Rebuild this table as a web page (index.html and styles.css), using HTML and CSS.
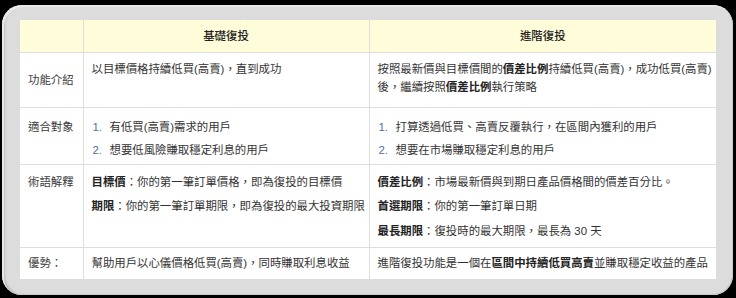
FILE: index.html
```html
<!DOCTYPE html>
<html lang="zh-Hant">
<head>
<meta charset="utf-8">
<title>復投比較</title>
<link rel="stylesheet" href="styles.css">
</head>
<body>
<div class="frame">
  <table class="compare">
    <colgroup>
      <col class="c-label">
      <col class="c-basic">
      <col class="c-adv">
    </colgroup>
    <thead>
      <tr class="row-head">
        <th></th>
        <th>基礎復投</th>
        <th>進階復投</th>
      </tr>
    </thead>
    <tbody>
      <tr class="row-intro">
        <td class="label mid">功能介紹</td>
        <td>以目標價格持續低買(高賣)，直到成功</td>
        <td>按照最新價與目標價間的<b>價差比例</b>持續低買(高賣)，成功低買(高賣)<br>後，繼續按照<b>價差比例</b>執行策略</td>
      </tr>
      <tr class="row-target">
        <td class="label">適合對象</td>
        <td>
          <ol class="nums">
            <li>有低買(高賣)需求的用戶</li>
            <li>想要低風險賺取穩定利息的用戶</li>
          </ol>
        </td>
        <td>
          <ol class="nums">
            <li>打算透過低買、高賣反覆執行，在區間內獲利的用戶</li>
            <li>想要在市場賺取穩定利息的用戶</li>
          </ol>
        </td>
      </tr>
      <tr class="row-terms">
        <td class="label">術語解釋</td>
        <td>
          <p class="term"><b>目標價</b>：你的第一筆訂單價格，即為復投的目標價</p>
          <p class="term"><b>期限</b>：你的第一筆訂單期限，即為復投的最大投資期限</p>
        </td>
        <td>
          <p class="term"><b>價差比例</b>：市場最新價與到期日產品價格間的價差百分比。</p>
          <p class="term"><b>首選期限</b>：你的第一筆訂單日期</p>
          <p class="term"><b>最長期限</b>：復投時的最大期限，最長為 30 天</p>
        </td>
      </tr>
      <tr class="row-adv">
        <td class="label mid">優勢：</td>
        <td class="mid">幫助用戶以心儀價格低買(高賣)，同時賺取利息收益</td>
        <td class="mid">進階復投功能是一個在<b>區間中持續低買高賣</b>並賺取穩定收益的產品</td>
      </tr>
    </tbody>
  </table>
</div>
</body>
</html>
```

FILE: styles.css
```css
html, body {
  margin: 0;
  padding: 0;
  background: #000;
}

body {
  width: 736px;
  height: 298px;
  overflow: hidden;
  font-family: "Liberation Sans", "Noto Sans CJK TC", sans-serif;
  font-size: 11.4px;
  color: #333;
}

.frame {
  box-sizing: border-box;
  width: 731px;
  height: 290px;
  margin: 5px 0 0 2px;
  padding: 15px 17px 17px 18px;
  background: #dcdcdc;
  border-radius: 20px;
  box-shadow: inset 2px 2px 0 #e9e9e9, inset -1px -1px 0 #c9c9c9, inset 3px 0 2px #bdbdbd;
}

.compare {
  width: 696px;
  height: 258px;
  border-collapse: collapse;
  table-layout: fixed;
  background: #fff;
}

.c-label { width: 63px; }
.c-basic { width: 286px; }
.c-adv { width: 347px; }

.compare th,
.compare td {
  border: 1px solid #dedede;
  padding: 0 8px;
  line-height: 18px;
  vertical-align: top;
  text-align: left;
  white-space: nowrap;
}

.compare tr > :first-child { border-left: none; }
.compare tr > :last-child { border-right: none; }
.compare thead th { border-top: none; }
.compare tbody tr:last-child td { border-bottom: none; }

.compare b { font-weight: 700; color: #222; }

.row-head { height: 32px; }
.row-head th {
  background: #fefcd9;
  text-align: center;
  vertical-align: middle;
  font-weight: 500;
  color: #222;
  border-top: none;
}

.label {
  padding-left: 7px;
  color: #3c3c3c;
}

.compare td.mid { vertical-align: middle; }

.row-intro { height: 55px; }
.row-intro td { padding-top: 7px; }
.row-intro td.mid { padding-top: 0; }

.row-target { height: 56px; }
.row-target td { padding-top: 10px; }

.row-terms { height: 83px; }
.row-terms td { padding-top: 8px; }

.row-adv { height: 32px; }

.nums {
  list-style: none;
  margin: 0;
  padding: 0;
  counter-reset: n;
}

.nums li {
  counter-increment: n;
  margin-bottom: 5px;
}

.nums li::before {
  content: counter(n) ".";
  display: inline-block;
  width: 17px;
  padding-left: 1px;
  color: #4f6fa8;
}

.term {
  margin: 0 0 6.5px;
}
```
